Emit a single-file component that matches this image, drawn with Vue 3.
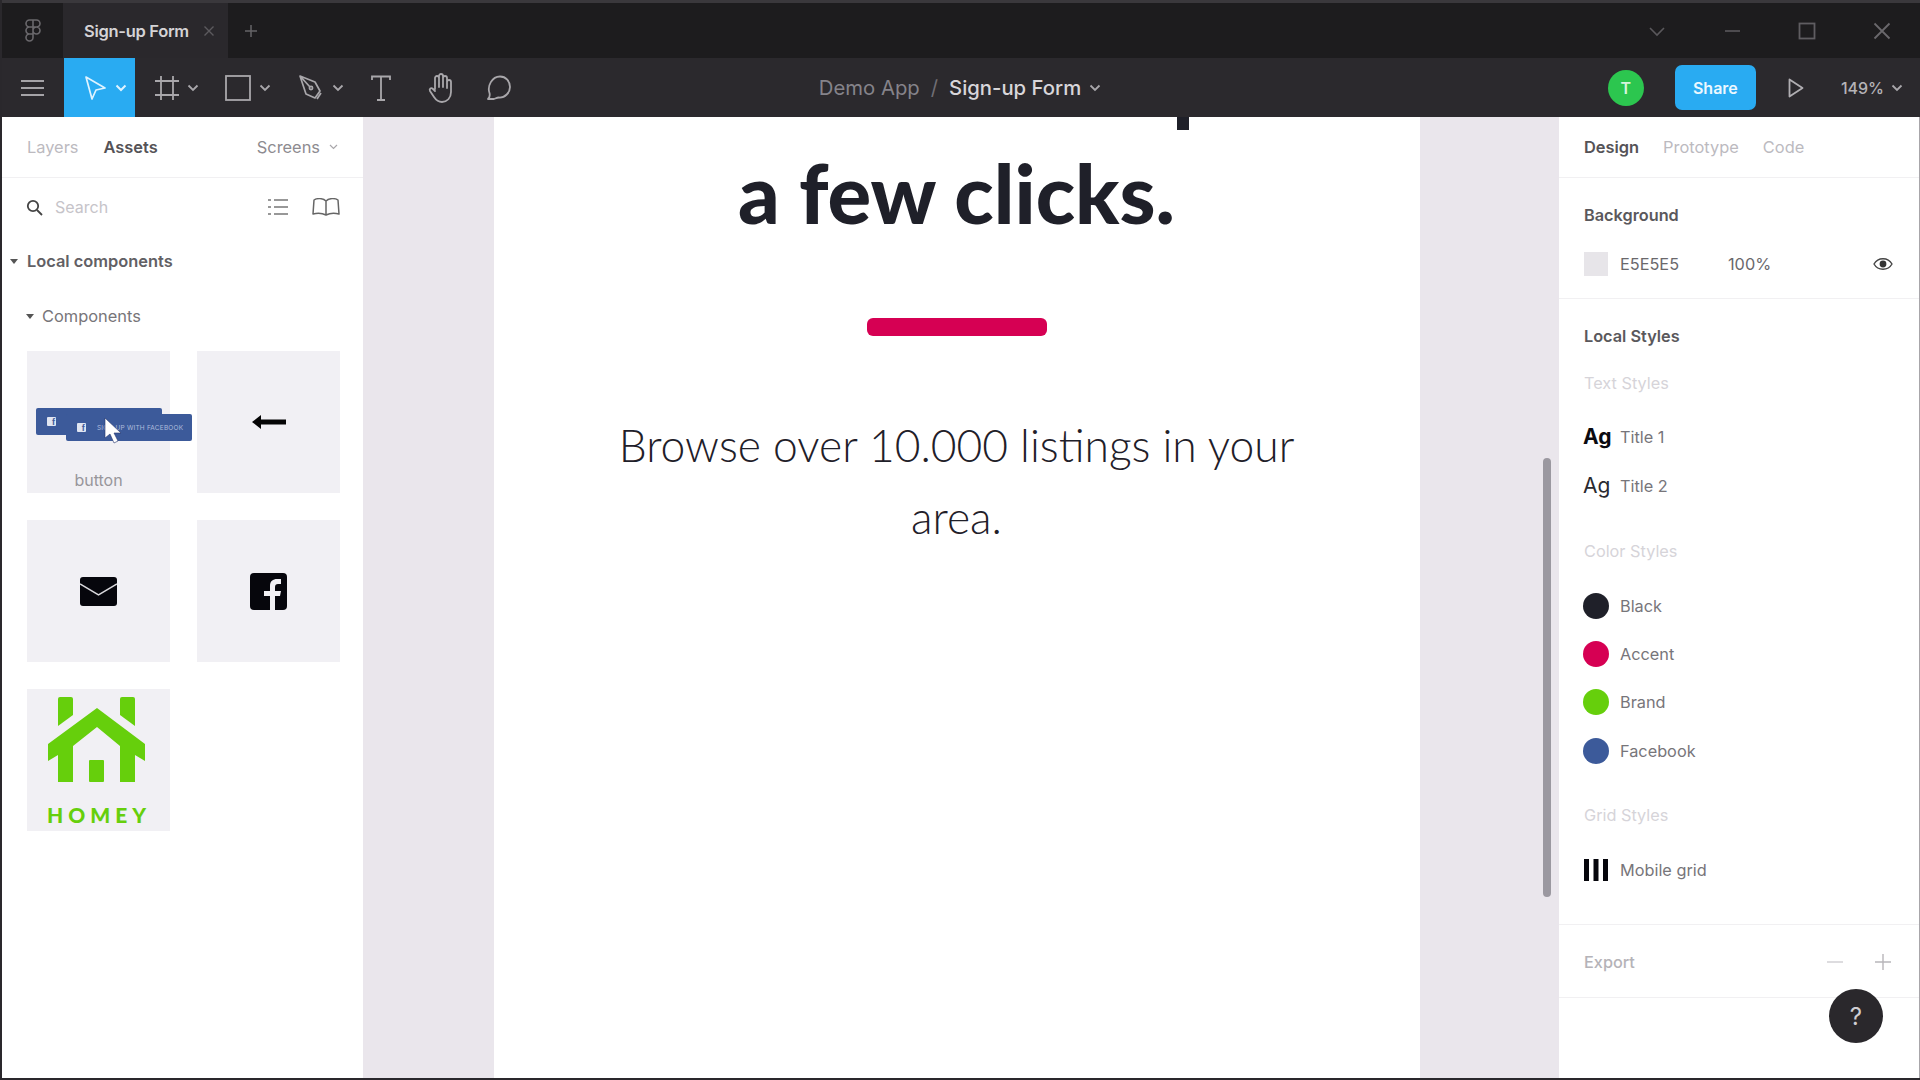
<script setup>
const colorStyles = [
  { name: 'Black', color: '#1f2029' },
  { name: 'Accent', color: '#d60053' },
  { name: 'Brand', color: '#66cf0c' },
  { name: 'Facebook', color: '#3c5a9a' },
]
</script>

<template>
  <div class="app">
    <header class="titlebar">
      <div class="logo">
        <svg width="16" height="24" viewBox="0 0 16 24" fill="none" stroke="#6a686c" stroke-width="1.6">
          <path d="M8 1H4.5a3.5 3.5 0 0 0 0 7H8zM8 1h3.500a3.500 3.500 0 0 1 0 7H8zM8 8H4.500a3.500 3.500 0 0 0 0 7H8zM8 11.500a3.500 3.500 0 1 0 7 0 3.500 3.500 0 1 0-7 0zM8 15H4.500A3.500 3.500 0 1 0 8 18.500z" />
        </svg>
      </div>
      <div class="tab">
        <span>Sign-up Form</span>
        <svg width="12" height="12" viewBox="0 0 12 12" stroke="#5c5a5e" stroke-width="1.4"><path d="M1.500 1.500l9 9M10.500 1.500l-9 9" /></svg>
      </div>
      <svg class="add-tab" width="14" height="14" viewBox="0 0 14 14" stroke="#666468" stroke-width="1.500"><path d="M7 1v12M1 7h12" /></svg>
      <div class="window-controls">
        <svg width="18" height="18" viewBox="0 0 18 18" fill="none" stroke="#5a585c" stroke-width="1.600"><path d="M2 6l7 7 7-7" /></svg>
        <svg width="18" height="18" viewBox="0 0 18 18" fill="none" stroke="#5a585c" stroke-width="1.600"><path d="M2 9h15" /></svg>
        <svg width="18" height="18" viewBox="0 0 18 18" fill="none" stroke="#5f5d61" stroke-width="1.800"><rect x="1.500" y="1.500" width="15" height="15" /></svg>
        <svg width="18" height="18" viewBox="0 0 18 18" fill="none" stroke="#6a686c" stroke-width="1.800"><path d="M1.500 1.500l15 15M16.500 1.500l-15 15" /></svg>
      </div>
    </header>

    <nav class="toolbar">
      <div class="tools">
        <svg class="menu" width="23" height="18" viewBox="0 0 23 18" stroke="#a5a3a7" stroke-width="2"><path d="M0 2h23M0 9h23M0 16h23" /></svg>
        <div class="tool active">
          <svg width="24" height="26" viewBox="0 0 24 26" fill="none" stroke="#dff3ff" stroke-width="1.700" stroke-linejoin="round"><path d="M3 2l19 11-9 2-4 9z" /></svg>
          <svg class="chev" width="12" height="8" viewBox="0 0 12 8" fill="none" stroke="#dff3ff" stroke-width="2"><path d="M1.500 1.500L6 6l4.500-4.500" /></svg>
        </div>
        <div class="tool frame">
          <svg width="24" height="26" viewBox="0 0 24 26" fill="none" stroke="#a9a7ab" stroke-width="1.800"><path d="M6 1v24M18 1v24M0 6h24M0 20h24" /></svg>
          <svg class="chev" width="12" height="8" viewBox="0 0 12 8" fill="none" stroke="#a9a7ab" stroke-width="1.800"><path d="M1.500 1.500L6 6l4.500-4.500" /></svg>
        </div>
        <div class="tool rect">
          <svg width="26" height="26" viewBox="0 0 26 26" fill="none" stroke="#a9a7ab" stroke-width="1.800"><rect x="1" y="1" width="24" height="24" /></svg>
          <svg class="chev" width="12" height="8" viewBox="0 0 12 8" fill="none" stroke="#a9a7ab" stroke-width="1.800"><path d="M1.500 1.500L6 6l4.500-4.500" /></svg>
        </div>
        <div class="tool pen">
          <svg width="26" height="26" viewBox="0 0 24 26" fill="none" stroke="#a9a7ab" stroke-width="1.700" stroke-linejoin="round"><path d="M1 1l15 6 5 9-5 7-9-4zM1 1l10 11M18 24l4-6" /><circle cx="12" cy="13" r="1.600" /></svg>
          <svg class="chev" width="12" height="8" viewBox="0 0 12 8" fill="none" stroke="#a9a7ab" stroke-width="1.800"><path d="M1.500 1.500L6 6l4.500-4.500" /></svg>
        </div>
        <svg class="icon-text" width="20" height="26" viewBox="0 0 20 26" fill="none" stroke="#a9a7ab" stroke-width="1.800"><path d="M1 5V1.500h18V5M10 1.500V25M6 25h8" /></svg>
        <svg class="icon-hand" width="26" height="30" viewBox="0 0 24 30" fill="none" stroke="#a9a7ab" stroke-width="1.800" stroke-linejoin="round" stroke-linecap="round"><path d="M7 16V5a2 2 0 0 1 4 0V3a2 2 0 0 1 4 0v2a2 2 0 0 1 4 0v4a2 2 0 0 1 4 0v10c0 6-4 10-9 10-4 0-6-2-8-5l-4-6c-1-2 1-4 3-2l2 2M11 5v9M15 5v9M19 9v6" /></svg>
        <svg class="icon-comment" width="26" height="26" viewBox="0 0 24 26" fill="none" stroke="#a9a7ab" stroke-width="1.800" stroke-linejoin="round"><path d="M1 24c2-2 2-4 1.500-6C0 11 5 1.500 13 1.500c6 0 10 5 10 10.500S18 23 12 22.500c-2 0-3.500 1-5 1.500z" /></svg>
      </div>
      <div class="doc-title">
        <span class="project">Demo App</span>
        <span class="slash">/</span>
        <span class="file">Sign-up Form</span>
        <svg class="title-chev" width="12" height="8" viewBox="0 0 12 8" fill="none" stroke="#a9a7ab" stroke-width="1.800"><path d="M1.500 1.500L6 6l4.500-4.500" /></svg>
      </div>
      <div class="actions">
        <div class="avatar">T</div>
        <button class="share">Share</button>
        <svg class="play" width="16" height="20" viewBox="0 0 16 20" fill="none" stroke="#b0aeb2" stroke-width="1.800" stroke-linejoin="round"><path d="M1.500 1.500L14.500 10 1.500 18.500z" /></svg>
        <span class="zoom">149%</span>
        <svg width="12" height="8" viewBox="0 0 12 8" fill="none" stroke="#a9a7ab" stroke-width="1.800"><path d="M1.500 1.500L6 6l4.500-4.500" /></svg>
      </div>
    </nav>

    <main class="workspace">
      <aside class="left-panel">
        <div class="panel-tabs left-tabs">
          <span class="muted">Layers</span>
          <span class="strong">Assets</span>
          <span class="screens">Screens
            <svg width="9" height="6" viewBox="0 0 9 6" fill="none" stroke="#a9a7ab" stroke-width="1.200"><path d="M1 1l3.500 3.500L8 1" /></svg>
          </span>
        </div>
        <div class="search-row">
          <svg width="17" height="17" viewBox="0 0 17 17" fill="none" stroke="#444" stroke-width="1.800"><circle cx="7" cy="7" r="5.200" /><path d="M11 11l5 5" /></svg>
          <span class="search-label">Search</span>
          <svg class="list-icon" width="20" height="18" viewBox="0 0 20 18" fill="none" stroke="#777" stroke-width="1.400"><path d="M0 2h3M6 2h14M0 9h3M6 9h14M0 16h3M6 16h14" /></svg>
          <svg width="28" height="18" viewBox="0 0 28 18" fill="none" stroke="#666" stroke-width="1.500" stroke-linejoin="round"><path d="M14 3C11 0 5 0 2 2L1 16c4-1 9-1 13 1 4-2 9-2 13-1L26 2c-3-2-9-2-12 1zM14 3v14" /></svg>
        </div>
        <div class="section-head local">
          <i class="caret"></i><span>Local components</span>
        </div>
        <div class="section-head sub">
          <i class="caret"></i><span>Components</span>
        </div>
        <div class="tiles">
          <div class="tile button-tile">
            <div class="fb-btn first"><i class="fb-mini">f</i></div>
            <div class="fb-btn second"><i class="fb-mini">f</i><span>SIGN UP WITH FACEBOOK</span></div>
            <svg class="cursor" width="18" height="28" viewBox="0 0 18 28"><path d="M1 1v20l5-4 4 9 4-2-4-8h7z" fill="#fff" stroke="#26356d" stroke-width="0.600" /></svg>
            <span class="tile-label">button</span>
          </div>
          <div class="tile">
            <svg width="34" height="14" viewBox="0 0 34 14"><path d="M0 7l9-7v4.500h25v5H9V14z" fill="#050505" /></svg>
          </div>
          <div class="tile">
            <svg width="37" height="29" viewBox="0 0 37 29"><rect width="37" height="29" rx="3" fill="#06060c" /><path d="M0 7l18.500 11L37 7" fill="none" stroke="#d9d8dc" stroke-width="1.500" /></svg>
          </div>
          <div class="tile">
            <svg width="37" height="37" viewBox="0 0 37 37"><rect width="37" height="37" rx="4" fill="#06060c" /><path d="M20 37V23h-6v-5h6v-5c0-5 3-7 7-7h4v5h-3c-2 0-3 1-3 3v4h6l-1 5h-5v14z" fill="#f1f0f4" /></svg>
          </div>
          <div class="tile">
            <svg width="143" height="142" viewBox="0 0 143 142">
              <g fill="#66cf0c">
                <path d="M31 10a2 2 0 0 1 2-2h11a2 2 0 0 1 2 2v16L31 37z" />
                <path d="M93 26V10a2 2 0 0 1 2-2h11a2 2 0 0 1 2 2v27z" />
                <path d="M70 19l48 36v17l-10-6v27H93V57L70 38 46 57v36H31V66l-10 6V55z" />
                <rect x="62" y="71" width="15" height="22" rx="1" />
                <text x="72" y="134" text-anchor="middle" class="homey">HOMEY</text>
              </g>
            </svg>
          </div>
        </div>
      </aside>

      <section class="canvas">
        <div class="page">
          <i class="descender"></i>
          <h1 class="headline">a few clicks.</h1>
          <div class="accent-bar"></div>
          <p class="lead">Browse over 10.000 listings in your<br />area.</p>
        </div>
        <div class="scrollbar"></div>
      </section>

      <aside class="right-panel">
        <div class="panel-tabs right-tabs">
          <span class="strong">Design</span>
          <span class="muted">Prototype</span>
          <span class="muted">Code</span>
        </div>
        <section class="group bg-group">
          <h3>Background</h3>
          <div class="bg-row">
            <i class="swatch"></i>
            <span class="hex">E5E5E5</span>
            <span class="pct">100%</span>
            <svg width="20" height="14" viewBox="0 0 20 14"><path d="M1 7c4-7 14-7 18 0-4 7-14 7-18 0z" fill="none" stroke="#444" stroke-width="1.400" /><circle cx="10" cy="7" r="3.400" fill="#333" /></svg>
          </div>
        </section>
        <section class="group styles-group">
          <h3>Local Styles</h3>
          <h4 class="first-sub">Text Styles</h4>
          <div class="style-row text-row"><b class="ag bold">Ag</b><span>Title 1</span></div>
          <div class="style-row text-row"><b class="ag">Ag</b><span>Title 2</span></div>
          <h4 class="color-sub">Color Styles</h4>
          <div v-for="item in colorStyles" :key="item.name" class="style-row color-row">
            <i class="dot" :style="{ background: item.color }"></i><span>{{ item.name }}</span>
          </div>
          <h4 class="grid-sub">Grid Styles</h4>
          <div class="style-row grid-row">
            <svg width="24" height="22" viewBox="0 0 24 22" fill="#06060c"><rect width="5" height="22" /><rect x="9.500" width="5" height="22" /><rect x="19" width="5" height="22" /></svg>
            <span>Mobile grid</span>
          </div>
        </section>
        <section class="export-row">
          <span>Export</span>
          <svg width="16" height="16" viewBox="0 0 16 16" stroke="#cfcdd1" stroke-width="1.400"><path d="M0 8h16" /></svg>
          <svg width="16" height="16" viewBox="0 0 16 16" stroke="#b8b6ba" stroke-width="1.400"><path d="M0 8h16M8 0v16" /></svg>
        </section>
        <button class="help">?</button>
      </aside>
    </main>
  </div>
</template>

<style>
html, body {
  margin: 0;
  background: #fff;
}
</style>

<style scoped>
.app {
  width: 1920px;
  height: 1080px;
  display: flex;
  flex-direction: column;
  overflow: hidden;
  box-sizing: border-box;
  border-left: 2px solid #2a282c;
  border-bottom: 2px solid #2a282c;
  font-family: Inter, "Liberation Sans", sans-serif;
  color: #555;
}

.titlebar {
  height: 58px;
  box-sizing: border-box;
  border-top: 3px solid #3a383c;
  background: #1d1c1e;
  display: flex;
  align-items: center;
  flex-shrink: 0;
}

.logo {
  width: 61px;
  display: flex;
  justify-content: center;
}

.tab {
  width: 165px;
  height: 100%;
  box-sizing: border-box;
  background: #2a282c;
  display: flex;
  align-items: center;
  justify-content: space-between;
  padding: 0 13px 0 21px;
  color: #d5d3d6;
  font-size: 16.500px;
  font-weight: 600;
  letter-spacing: -0.3px;
  white-space: nowrap;
}

.add-tab {
  margin-left: 16px;
}

.window-controls {
  margin-left: auto;
  display: flex;
  gap: 57px;
  padding-right: 29px;
}

.toolbar {
  height: 59px;
  background: #2b292d;
  display: grid;
  grid-template-columns: 1fr auto 1fr;
  align-items: center;
  flex-shrink: 0;
  margin-left: -2px;
}

.tools {
  display: flex;
  align-items: center;
  height: 100%;
}

.menu {
  margin: 0 20px 0 21px;
}

.tool {
  display: flex;
  align-items: center;
  height: 100%;
}

.tool .chev {
  margin-left: 8px;
}

.tool.active {
  width: 71px;
  background: #29abf2;
  padding-left: 19px;
  box-sizing: border-box;
  margin-right: 20px;
}

.tool.frame {
  margin-right: 26px;
}

.tool.rect {
  margin-right: 27px;
}

.tool.pen {
  margin-right: 27px;
}

.icon-text {
  margin-right: 36px;
}

.icon-hand {
  margin-right: 33px;
}

.doc-title {
  display: flex;
  align-items: center;
  gap: 11px;
  font-size: 20.300px;
}

.title-chev {
  margin-left: -3px;
}

.project {
  color: #85838a;
}

.slash {
  color: #706e74;
}

.file {
  color: #d8d6da;
  font-weight: 500;
}

.actions {
  display: flex;
  align-items: center;
  justify-content: flex-end;
  padding-right: 17px;
}

.avatar {
  width: 36px;
  height: 36px;
  border-radius: 50%;
  background: #2cc64f;
  color: #d6f5dd;
  font-size: 16px;
  font-weight: 600;
  display: flex;
  align-items: center;
  justify-content: center;
  margin-right: 31px;
}

.share {
  width: 81px;
  height: 45px;
  border: none;
  border-radius: 7px;
  background: #29abf2;
  color: #ecf8ff;
  font: 600 16px Inter, "Liberation Sans", sans-serif;
  margin-right: 32px;
}

.play {
  margin-right: 37px;
}

.zoom {
  color: #b5b3b7;
  font-size: 16px;
  font-weight: 500;
  margin-right: 7px;
}

.workspace {
  flex: 1;
  display: flex;
  min-height: 0;
}

.left-panel {
  width: 361px;
  box-sizing: border-box;
  background: #fff;
  flex-shrink: 0;
}

.panel-tabs {
  height: 61px;
  box-sizing: border-box;
  border-bottom: 1px solid #f1f0f2;
  display: flex;
  align-items: center;
  font-size: 16.400px;
}

.muted {
  color: #bcbabf;
}

.strong {
  color: #555357;
  font-weight: 600;
}

.left-tabs {
  padding: 0 25px 0 25px;
  gap: 25px;
}

.screens {
  margin-left: auto;
  color: #8d8b90;
  display: flex;
  align-items: center;
  gap: 9px;
}

.search-row {
  height: 58px;
  display: flex;
  align-items: center;
  padding: 0 23px 0 24px;
}

.search-label {
  margin-left: 12px;
  color: #c6c4c9;
  font-size: 16px;
}

.list-icon {
  margin-left: auto;
  margin-right: 24px;
}

.section-head {
  display: flex;
  align-items: center;
  font-size: 16.400px;
}

.caret {
  width: 0;
  height: 0;
  border-left: 4px solid transparent;
  border-right: 4px solid transparent;
  border-top: 5px solid #555;
}

.local {
  margin-top: 6px;
  padding-left: 8px;
  height: 38px;
  gap: 9px;
  font-weight: 600;
  color: #626064;
}

.sub {
  margin-top: 17px;
  padding-left: 24px;
  height: 38px;
  gap: 8px;
  color: #777579;
}

.tiles {
  display: grid;
  grid-template-columns: 143px 143px;
  gap: 27px;
  padding: 16px 0 0 25px;
}

.tile {
  position: relative;
  height: 142px;
  background: #f1f0f4;
  display: flex;
  align-items: center;
  justify-content: center;
}

.fb-btn {
  position: absolute;
  background: #3c5a9a;
  border-radius: 2px;
  display: flex;
  align-items: center;
}

.fb-btn.first {
  left: 9px;
  top: 57px;
  width: 126px;
  height: 27px;
  padding-left: 11px;
  box-sizing: border-box;
}

.fb-btn.second {
  left: 39px;
  top: 63px;
  width: 126px;
  height: 27px;
  padding-left: 11px;
  box-sizing: border-box;
  gap: 11px;
  color: #aebcdc;
  font-size: 6.500px;
  letter-spacing: 0.2px;
  white-space: nowrap;
}

.fb-mini {
  width: 9px;
  height: 9px;
  background: #dfe5f2;
  border-radius: 1px;
  flex-shrink: 0;
  color: #3c5a9a;
  font: 700 9px/10px "Liberation Sans", sans-serif;
  text-align: right;
  padding-right: 1px;
  box-sizing: border-box;
}

.cursor {
  position: absolute;
  left: 77px;
  top: 66px;
}

.tile-label {
  position: absolute;
  left: 0;
  right: 0;
  bottom: 3px;
  text-align: center;
  font-size: 16px;
  color: #98969b;
}

.homey {
  font-family: Lato, sans-serif;
  font-weight: 900;
  font-size: 21px;
  letter-spacing: 5px;
}

.canvas {
  position: relative;
  flex: 1;
  background: #eae6ec;
  display: flex;
  justify-content: center;
  padding-right: 9px;
}

.page {
  position: relative;
  width: 926px;
  height: 100%;
  background: #fff;
  text-align: center;
  overflow: hidden;
}

.descender {
  position: absolute;
  left: 683px;
  top: 0;
  width: 12px;
  height: 13px;
  background: #1f2029;
}

.headline {
  margin: 36px 0 0;
  font-family: Lato, "Liberation Sans", sans-serif;
  font-weight: 900;
  font-size: 81.500px;
  line-height: 80px;
  color: #1f2029;
}

.accent-bar {
  width: 180px;
  height: 18px;
  border-radius: 6px;
  background: #d60053;
  margin: 85px auto 0;
}

.lead {
  margin: 73px 0 0;
  font-family: Lato, "Liberation Sans", sans-serif;
  font-weight: 300;
  font-size: 44.400px;
  line-height: 72px;
  color: #1f2029;
}

.scrollbar {
  position: absolute;
  right: 8px;
  top: 341px;
  width: 8px;
  height: 439px;
  border-radius: 4px;
  background: #9b98a0;
}

.right-panel {
  position: relative;
  width: 361px;
  box-sizing: border-box;
  background: #fff;
  border-right: 1px solid #a8a6aa;
  flex-shrink: 0;
}

.right-tabs {
  padding-left: 25px;
  gap: 24px;
}

.group {
  padding: 0 25px;
}

.group h3 {
  margin: 0;
  font-size: 16.300px;
  font-weight: 600;
  line-height: 20px;
  color: #5a585c;
}

.group h4 {
  margin: 0;
  font-size: 16.300px;
  font-weight: 400;
  line-height: 20px;
  color: #d6d4d9;
}

.bg-group {
  height: 121px;
  box-sizing: border-box;
  padding-top: 27px;
  border-bottom: 1px solid #f1f0f2;
}

.bg-row {
  display: flex;
  align-items: center;
  margin-top: 27px;
  font-size: 16.300px;
  color: #6a686c;
}

.swatch {
  width: 24px;
  height: 24px;
  background: #e7e5e9;
  margin-right: 12px;
}

.hex {
  width: 108px;
}

.pct {
  flex: 1;
}

.bg-row svg {
  margin-right: 1px;
}

.styles-group {
  height: 626px;
  box-sizing: border-box;
  padding-top: 27px;
  border-bottom: 1px solid #f1f0f2;
}

.first-sub {
  margin-top: 27px !important;
}

.style-row {
  display: flex;
  align-items: center;
  font-size: 16.300px;
  color: #77757a;
}

.text-row {
  height: 49px;
}

.first-sub + .text-row {
  margin-top: 19px;
}

.ag {
  width: 37px;
  margin-left: -1px;
  font-size: 21px;
  font-weight: 400;
  color: #2a2a30;
  flex-shrink: 0;
}

.ag.bold {
  font-weight: 700;
  color: #0a0a10;
}

.color-sub {
  margin-top: 31px !important;
}

.color-row {
  height: 48.200px;
}

.color-sub + .color-row {
  margin-top: 21px;
}

.dot {
  width: 26px;
  height: 26px;
  border-radius: 50%;
  margin: 0 11px 0 -1px;
  flex-shrink: 0;
}

.grid-sub {
  margin-top: 30px !important;
}

.grid-row {
  margin-top: 34px;
  gap: 12px;
}

.export-row {
  height: 73px;
  box-sizing: border-box;
  border-bottom: 1px solid #f1f0f2;
  padding: 2px 28px 0 25px;
  display: flex;
  align-items: center;
  gap: 32px;
  font-size: 16.300px;
  font-weight: 500;
  color: #b5b3b8;
}

.export-row span {
  margin-right: auto;
}

.help {
  position: absolute;
  left: 270px;
  top: 872px;
  width: 54px;
  height: 54px;
  border: none;
  border-radius: 50%;
  background: #2a282c;
  color: #d0ced2;
  font: 400 24px Inter, "Liberation Sans", sans-serif;
}
</style>
